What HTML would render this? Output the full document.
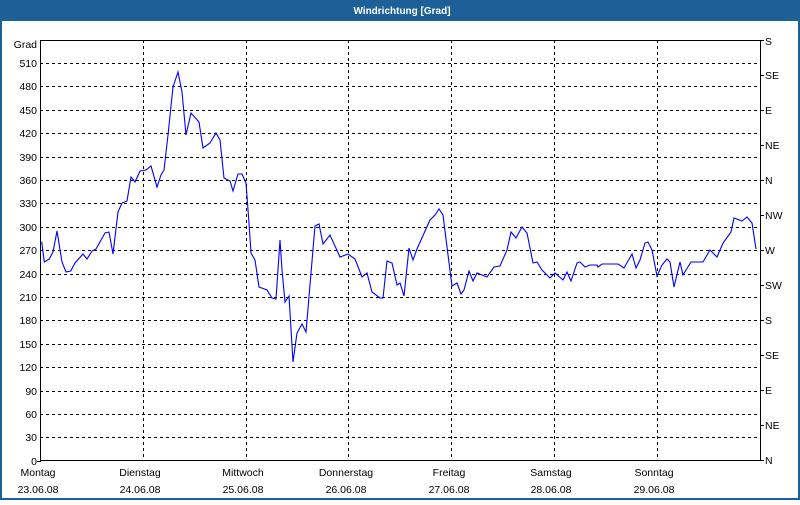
<!DOCTYPE html>
<html><head><meta charset="utf-8"><style>
html,body{margin:0;padding:0;background:#fff}
body{width:800px;height:500px;overflow:hidden}
svg text{font-family:"Liberation Sans",sans-serif;font-size:10.5px;fill:#000}
</style></head><body>
<svg width="800" height="500" xmlns="http://www.w3.org/2000/svg" shape-rendering="crispEdges">
<rect x="0" y="0" width="800" height="500" fill="#fff"/>
<rect x="0" y="0" width="800" height="21" fill="#1c6097"/>
<rect x="0" y="0" width="2" height="500" fill="#1c6097"/>
<rect x="798" y="0" width="2" height="500" fill="#1c6097"/>
<rect x="0" y="498" width="800" height="2" fill="#1c6097"/>
<text x="402" y="14" text-anchor="middle" style="fill:#fff;font-weight:bold;font-size:10px">Windrichtung [Grad]</text>
<g stroke="#000" stroke-width="1" stroke-dasharray="3,3" fill="none">
<path d="M40 63.5H760M40 86.5H760M40 110.5H760M40 133.5H760M40 157.5H760M40 180.5H760M40 203.5H760M40 227.5H760M40 250.5H760M40 274.5H760M40 297.5H760M40 320.5H760M40 344.5H760M40 367.5H760M40 391.5H760M40 414.5H760M40 437.5H760"/>
<path d="M143.5 40V460M246.5 40V460M348.5 40V460M451.5 40V460M554.5 40V460M657.5 40V460"/>
</g>
<g stroke="#000" stroke-width="1" fill="none">
<path d="M40.5 40V461M40 40.5H760.5M760.5 40V461M40 460.5H761"/>
<path d="M760 75.5h4M760 110.5h4M760 145.5h4M760 180.5h4M760 215.5h4M760 250.5h4M760 285.5h4M760 320.5h4M760 355.5h4M760 390.5h4M760 425.5h4M760 460.5h4M760 40.5h4"/>
<path d="M37 461.5h4"/>
</g>
<g text-anchor="end">
<text x="37" y="48">Grad</text>
<text x="37" y="67">510</text><text x="37" y="90">480</text><text x="37" y="114">450</text><text x="37" y="137">420</text><text x="37" y="161">390</text><text x="37" y="184">360</text><text x="37" y="207">330</text><text x="37" y="231">300</text><text x="37" y="254">270</text><text x="37" y="278">240</text><text x="37" y="301">210</text><text x="37" y="324">180</text><text x="37" y="348">150</text><text x="37" y="371">120</text><text x="37" y="395">90</text><text x="37" y="418">60</text><text x="37" y="441">30</text><text x="37" y="465">0</text>
</g>
<g>
<text x="765" y="45">S</text><text x="765" y="79">SE</text><text x="765" y="114">E</text><text x="765" y="149">NE</text><text x="765" y="184">N</text><text x="765" y="219">NW</text><text x="765" y="254">W</text><text x="765" y="289">SW</text><text x="765" y="324">S</text><text x="765" y="359">SE</text><text x="765" y="394">E</text><text x="765" y="429">NE</text><text x="765" y="464">N</text>
</g>
<g text-anchor="middle">
<text x="38" y="476">Montag</text><text x="38" y="493">23.06.08</text>
<text x="140" y="476">Dienstag</text><text x="140" y="493">24.06.08</text>
<text x="243" y="476">Mittwoch</text><text x="243" y="493">25.06.08</text>
<text x="346" y="476">Donnerstag</text><text x="346" y="493">26.06.08</text>
<text x="449" y="476">Freitag</text><text x="449" y="493">27.06.08</text>
<text x="551" y="476">Samstag</text><text x="551" y="493">28.06.08</text>
<text x="654" y="476">Sonntag</text><text x="654" y="493">29.06.08</text>
</g>
<polyline shape-rendering="auto" fill="none" stroke="#0000ff" stroke-width="1.1" points="41.7,241.7 44.3,262 49.3,259 53,252 57,231 62,262 66,272 70.7,271 75,263 83,254 87,259 92,251 96,249 105,233 109,232 113,254 118,212 122,203 127,201 131,177 135,182 140,171 146,170 151,166 157,187 161,175 164,170 168,135 173,87 178,72 182,92 186,135 191,113 199,122 203,148 210,143 216,133 220,140 224,178 230,181 233,191 238,174 242,174 246,183 249,223 251,253 255,260 259,287 267,290 272,298 276,299 280,240 282,270 285,302 289,296 293,362 297,333 302,324 306,332 315,226 319,224 323,244 330,235 340,257 348,254 355,259 362,277 367,273 372,292 380,298 383,298 387,261 392,263 397,285 400,283 404,296 409,248 413,260 417,249 430,220 435,215 439,209 443,215 447,247 452,286 457,283 461,294 464,290 469,271 473,281 477,273 487,277 494,267 500,266 507,250 511,232 516,238 522,227 527,233 533,263 537,262 542,270 550,278 555,273 563,280 567,272 571,281 577,263 580,262 585,267 590,265 597,265 598,267 602,264 618,264 624,268 632,254 636,268 640,260 645,243 648,242 652,250 657,276 662,265 667,259 670,262 674,287 680,262 683,275 691,262 703,262 710,250 717,257 723,243 731,232 734,218 742,221 747,217 752,223 756,249"/>
</svg>
</body></html>
